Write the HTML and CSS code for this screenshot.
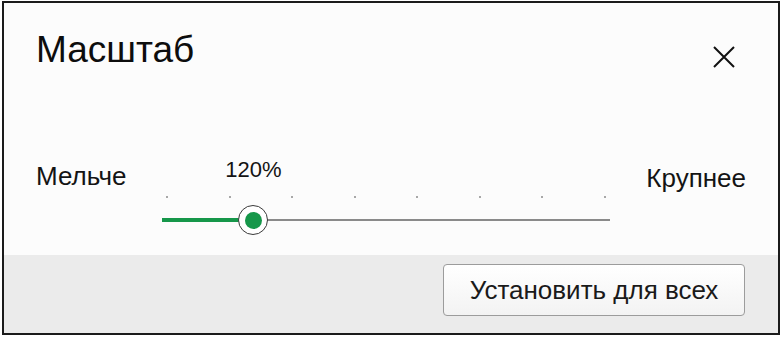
FILE: index.html
```html
<!DOCTYPE html>
<html lang="ru">
<head>
<meta charset="utf-8">
<title>Масштаб</title>
<link rel="stylesheet" href="styles.css">
</head>
<body>
<div class="dialog">
  <div class="header">
    <div class="title">Масштаб</div>
    <button class="close" aria-label="Закрыть">
      <svg width="22" height="22" viewBox="0 0 22 22"><path d="M1 1L21 21M21 1L1 21" stroke="#111" stroke-width="2" fill="none"/></svg>
    </button>
  </div>
  <div class="scale">
    <div class="label label-left">Мельче</div>
    <div class="slider">
      <div class="value" style="left:20.4%">120%</div>
      <div class="ticks">
        <span class="dot"></span><span class="dot"></span><span class="dot"></span><span class="dot"></span>
        <span class="dot"></span><span class="dot"></span><span class="dot"></span><span class="dot"></span>
      </div>
      <div class="track">
        <div class="fill" style="width:20.4%"></div>
        <div class="thumb" style="left:20.4%"><span class="thumb-dot"></span></div>
      </div>
    </div>
    <div class="label label-right">Крупнее</div>
  </div>
  <div class="footer">
    <button class="btn">Установить для всех</button>
  </div>
</div>
</body>
</html>
```
FILE: styles.css
```css
html, body {
  margin: 0;
  padding: 0;
  background: #ffffff;
}
body {
  font-family: "Liberation Sans", Arial, sans-serif;
  color: #111;
}
.dialog {
  box-sizing: border-box;
  width: 778px;
  height: 334px;
  margin: 1px 0 0 2px;
  border: 2px solid #1b1b1b;
  background: #fcfcfc;
  display: flex;
  flex-direction: column;
}
.header {
  height: 128px;
  box-sizing: border-box;
  padding: 25px 43px 0 32px;
  display: flex;
  justify-content: space-between;
  align-items: flex-start;
}
.title {
  font-size: 37px;
  line-height: 44px;
  color: #0d0d0d;
}
.close {
  margin-top: 18px;
  padding: 0;
  border: 0;
  background: none;
  width: 22px;
  height: 22px;
  display: block;
}
.close svg { display: block; }
.scale {
  height: 124px;
  display: flex;
  align-items: flex-start;
  box-sizing: border-box;
  padding: 0 32px 0 32px;
}
.label {
  font-size: 26px;
  line-height: 30px;
  color: #141414;
}
.label-left {
  margin-top: 30px;
  width: 126px;
}
.label-right {
  margin-top: 32px;
  margin-left: auto;
}
.slider {
  position: relative;
  width: 448px;
  height: 124px;
  display: flex;
  flex-direction: column;
}
.value {
  position: absolute;
  top: 27px;
  transform: translateX(-50%);
  font-size: 22px;
  line-height: 24px;
  color: #141414;
  white-space: nowrap;
}
.ticks {
  margin-top: 65px;
  padding: 0 4px;
  display: flex;
  justify-content: space-between;
}
.dot {
  width: 2px;
  height: 2px;
  background: #8c8c8c;
  border-radius: 1px;
}
.track {
  position: relative;
  margin-top: 21px;
  height: 2px;
  background: #8a8a8a;
}
.fill {
  height: 4px;
  margin-top: -1px;
  background: #16974a;
}
.thumb {
  position: absolute;
  top: 50%;
  width: 30px;
  height: 30px;
  box-sizing: border-box;
  border: 1px solid #3a3a3a;
  border-radius: 50%;
  background: #ffffff;
  transform: translate(-50%, -50%);
  display: flex;
  align-items: center;
  justify-content: center;
}
.thumb-dot {
  width: 17px;
  height: 17px;
  border-radius: 50%;
  background: #16974a;
}
.footer {
  flex: 1;
  background: #ebebeb;
  display: flex;
  justify-content: flex-end;
  align-items: flex-start;
  padding: 9px 33px 0 0;
}
.btn {
  width: 302px;
  height: 52px;
  box-sizing: border-box;
  border: 1px solid #9c9c9c;
  border-radius: 4px;
  background: linear-gradient(#ffffff, #f3f3f3);
  font-family: "Liberation Sans", Arial, sans-serif;
  font-size: 26px;
  color: #1a1a1a;
  padding: 0;
}
```
